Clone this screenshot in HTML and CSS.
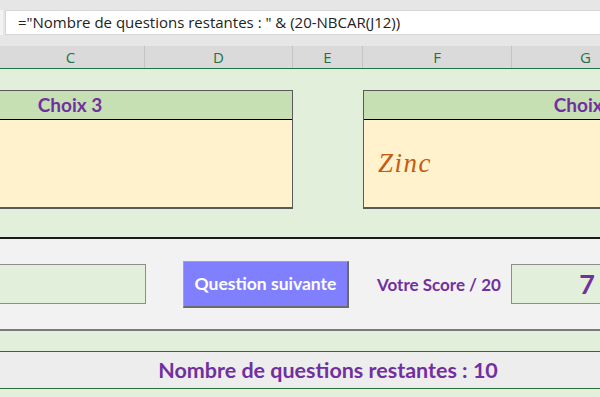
FILE: index.html
```html
<!DOCTYPE html>
<html>

<head>
    <meta charset="utf-8">
    <link rel="stylesheet" href="styles.css">
</head>

<body>
    <div id="formula-bar">
        <div class="name-edge"></div>
        <div class="formula">="Nombre de questions restantes : " &amp; (20-NBCAR(J12))</div>
    </div>
    <div id="col-headers">
        <div class="col">C</div>
        <div class="col">D</div>
        <div class="col">E</div>
        <div class="col">F</div>
        <div class="col">G</div>
    </div>
    <div id="choices">
        <div class="choice">
            <div class="choice-title">Choix 3</div>
            <div class="choice-body"></div>
        </div>
        <div class="choice">
            <div class="choice-title">Choix 4</div>
            <div class="choice-body">
                <span class="answer">Zinc</span>
            </div>
        </div>
    </div>
    <div id="controls">
        <div class="field"></div>
        <button class="next">Question suivante</button>
        <span class="score-label">Votre Score / 20</span>
        <div class="field score">7</div>
    </div>
    <div class="band"></div>
    <div id="remaining">Nombre de questions restantes : 10</div>
    <div class="band last"></div>
</body>

</html>
```

FILE: styles.css
```css
html,
body {
    margin: 0;
    padding: 0;
    width: 600px;
    height: 397px;
    overflow: hidden;
    background: #e2efda;
    font-family: Lato, "Open Sans", sans-serif;
}

#formula-bar {
    display: flex;
    height: 46px;
    background: #e6e6e6;
    padding-top: 10px;
    box-sizing: border-box;

    & .name-edge {
        width: 3px;
        height: 25px;
        background: #f3f3f3;
        margin-right: 2px;
    }

    & .formula {
        flex: 1;
        height: 25px;
        background: #fff;
        border: 1px solid #d6d6d6;
        border-right: none;
        box-sizing: border-box;
        padding-left: 12px;
        font-family: "Open Sans", sans-serif;
        font-size: 15px;
        line-height: 23px;
        color: #222;
        white-space: nowrap;
    }
}

#col-headers {
    display: grid;
    grid-template-columns: 148px 148px 70px 149px 148px;
    margin-left: -3px;
    height: 22px;
    background: #dadada;
    border-bottom: 1px solid #217346;

    & .col {
        border-right: 1px solid #c4c4c4;
        text-align: center;
        font-family: "Open Sans", sans-serif;
        font-size: 15px;
        line-height: 22px;
        color: #217346;
    }
}

#choices {
    display: grid;
    grid-template-columns: 446px 446px;
    column-gap: 70px;
    margin-left: -153px;
    padding: 21px 0 28px;
    border-bottom: 2px solid #1a1a1a;
}

.choice {
    border: 1px solid #595959;
    border-bottom: 2px solid #595959;

    & .choice-title {
        height: 28px;
        background: #c6e0b4;
        border-bottom: 1px solid #000;
        text-align: center;
        font-weight: bold;
        font-size: 19px;
        line-height: 28px;
        color: #7030a0;
        white-space: nowrap;
    }

    & .choice-body {
        height: 87px;
        background: #fff2cc;
        display: flex;
        align-items: center;
        padding-left: 14px;
    }
}

.answer {
    font-family: "Liberation Serif", serif;
    font-style: italic;
    font-size: 27px;
    letter-spacing: 1.5px;
    color: #c55a11;
}

#controls {
    display: flex;
    align-items: center;
    height: 90px;
    background: #f2f2f2;
    border-bottom: 2px solid #7a7a7a;

    & > * {
        flex-shrink: 0;
    }

    & .field {
        height: 40px;
        background: #e2efda;
        border: 1px solid #8c8c8c;
        box-sizing: border-box;
    }

    & .field:first-child {
        width: 161px;
        margin-left: -15px;
    }

    & .next {
        margin-left: 37px;
        width: 166px;
        height: 47px;
        background: #8080ff;
        border: 1px solid #a6a6a6;
        border-right: 2px solid #6b6b6b;
        border-bottom: 2px solid #6b6b6b;
        font-family: inherit;
        font-weight: bold;
        font-size: 17.5px;
        color: #fff;
        padding: 0;
    }

    & .score-label {
        margin-left: 28px;
        font-weight: bold;
        font-size: 17px;
        color: #7030a0;
        white-space: nowrap;
    }

    & .score {
        margin-left: 10px;
        width: 100px;
        box-sizing: border-box;
        text-align: right;
        padding-right: 15px;
        font-weight: bold;
        font-size: 27px;
        line-height: 38px;
        color: #7030a0;
    }
}

.band {
    height: 20px;
    border-bottom: 1px solid #2e6b3c;
}

.band.last {
    border-bottom: none;
}

#remaining {
    height: 36px;
    background: #ededed;
    border-bottom: 1px solid #2e6b3c;
    text-align: center;
    padding-left: 56px;
    font-weight: bold;
    font-size: 21.5px;
    line-height: 36px;
    color: #7030a0;
    white-space: nowrap;
}
```
